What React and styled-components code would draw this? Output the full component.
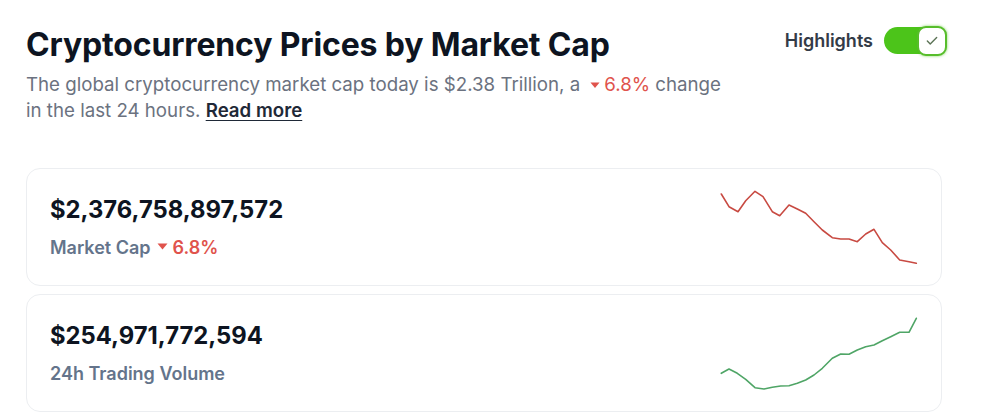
import React from "react";
import styled, { createGlobalStyle } from "styled-components";

const Global = createGlobalStyle`
  html, body { margin: 0; padding: 0; background: #ffffff; }
  body { font-family: Inter, "Noto Sans", sans-serif; -webkit-font-smoothing: antialiased; }
`;

const Page = styled.div`
  width: 916px;
  margin-left: 26px;
  padding-top: 26px;
`;

const Header = styled.div`
  display: flex;
  justify-content: space-between;
  align-items: flex-start;
`;

const Title = styled.h1`
  margin: 0;
  font-size: 32px;
  line-height: 38px;
  font-weight: 700;
  color: #0d1421;
  letter-spacing: -0.15px;
`;

const ToggleWrap = styled.div`
  display: flex;
  align-items: center;
  gap: 11px;
  margin-right: -5px;
  margin-top: 1px;
`;

const ToggleLabel = styled.span`
  font-size: 18px;
  font-weight: 600;
  color: #333b47;
`;

const Track = styled.div`
  position: relative;
  width: 63px;
  height: 27px;
  border-radius: 14px;
  background: #4cc41a;
`;

const Knob = styled.div`
  position: absolute;
  right: 0;
  top: -1px;
  width: 26px;
  height: 26px;
  border-radius: 9px;
  background: #ffffff;
  border: 2px solid #57bd2b;
  box-shadow: 0 0 3px rgba(76, 196, 26, 0.7);
  display: flex;
  align-items: center;
  justify-content: center;
`;

const Subtitle = styled.p`
  margin: 8px 0 0;
  font-size: 18.7px;
  line-height: 26px;
  color: #6b7280;
  width: 700px;
`;

const Change = styled.span`
  color: #e0534c;
  white-space: nowrap;
`;

const Caret = styled.svg`
  display: inline-block;
  vertical-align: middle;
  margin-bottom: 2px;
`;

const ReadMore = styled.a`
  color: #1f2937;
  font-weight: 600;
  text-decoration: underline;
  text-underline-offset: 3px;
`;

const Cards = styled.div`
  margin-top: 44px;
  display: flex;
  flex-direction: column;
  gap: 8px;
`;

const Card = styled.div`
  height: 118px;
  border: 1px solid #eceef1;
  border-radius: 14px;
  display: flex;
  align-items: center;
  justify-content: space-between;
  padding: 0 22px 0 23px;
  box-sizing: border-box;
`;

const Info = styled.div`
  display: flex;
  flex-direction: column;
  gap: 13px;
`;

const Value = styled.div`
  font-size: 23.8px;
  line-height: 28px;
  font-weight: 700;
  color: #0d1421;
`;

const Label = styled.div`
  font-size: 18px;
  line-height: 22px;
  font-weight: 600;
  color: #64748b;
  display: flex;
  align-items: center;
`;

const LabelChange = styled.span`
  color: #e0534c;
  display: inline-flex;
  align-items: center;
`;

const redPts = [
  [722.3, 194], [730, 206.7], [739, 211.7], [746.7, 200.7], [756, 191.3], [764, 196.7],
  [773.3, 211.7], [780.7, 215.7], [790, 205], [798.3, 209], [806.7, 213.3], [815, 221.7],
  [823.3, 230], [833.3, 237.7], [841.7, 239], [850, 239], [858.3, 241.7], [866.7, 234],
  [875, 229.3], [883.3, 242.7], [891.7, 250], [900.7, 260], [910, 261.7], [917.3, 263.3],
];
const greenPts = [
  [722.3, 373.3], [730, 369], [738.3, 373.3], [746.7, 379.3], [756, 387.7], [765, 389],
  [773.3, 387.3], [781.7, 386], [790, 385.7], [798.3, 383.3], [806.7, 380], [815, 375],
  [823.3, 368.3], [833.3, 358.3], [841.7, 354], [850, 354.3], [858.3, 350], [866.7, 346.7],
  [875, 345], [883.3, 340.7], [891.7, 336.7], [900.7, 332.3], [910, 332.3], [917.3, 318.3],
];

function Spark({ pts, top, color }) {
  const d = pts
    .map(([x, y], i) => `${i ? "L" : "M"}${(x - 720).toFixed(1)} ${(y - top).toFixed(1)}`)
    .join(" ");
  return (
    <svg width="200" height="118" viewBox="0 0 200 118">
      <path d={d} fill="none" stroke={color} strokeWidth="1.6" strokeLinejoin="round" strokeLinecap="round" />
    </svg>
  );
}

const DownCaret = ({ ml = 6, mr = 4, w = 11 }) => (
  <Caret width={w} height={w * 0.64} viewBox="0 0 11 7" style={{ marginLeft: ml, marginRight: mr }}>
    <path d="M0.5 0.5 H10.5 L5.5 6.5 Z" fill="#e0534c" />
  </Caret>
);

export default function App() {
  return (
    <>
      <Global />
      <Page>
        <Header>
          <Title>Cryptocurrency Prices by Market Cap</Title>
          <ToggleWrap>
            <ToggleLabel>Highlights</ToggleLabel>
            <Track>
              <Knob>
                <svg width="14" height="14" viewBox="0 0 24 24" fill="none" stroke="#5b7355" strokeWidth="2.4" strokeLinecap="round" strokeLinejoin="round">
                  <path d="M20 6 9 17l-5-5" />
                </svg>
              </Knob>
            </Track>
          </ToggleWrap>
        </Header>
        <Subtitle>
          The global cryptocurrency market cap today is $2.38 Trillion, a
          <Change>
            <DownCaret ml={10} mr={4} w={10} />6.8%
          </Change>{" "}
          change in the last 24 hours. <ReadMore href="#">Read more</ReadMore>
        </Subtitle>
        <Cards>
          <Card>
            <Info>
              <Value>$2,376,758,897,572</Value>
              <Label>
                Market Cap
                <LabelChange>
                  <DownCaret ml={6} mr={5} />6.8%
                </LabelChange>
              </Label>
            </Info>
            <Spark pts={redPts} top={168} color="#c84a42" />
          </Card>
          <Card>
            <Info>
              <Value>$254,971,772,594</Value>
              <Label>24h Trading Volume</Label>
            </Info>
            <Spark pts={greenPts} top={294} color="#4fa566" />
          </Card>
        </Cards>
      </Page>
    </>
  );
}
